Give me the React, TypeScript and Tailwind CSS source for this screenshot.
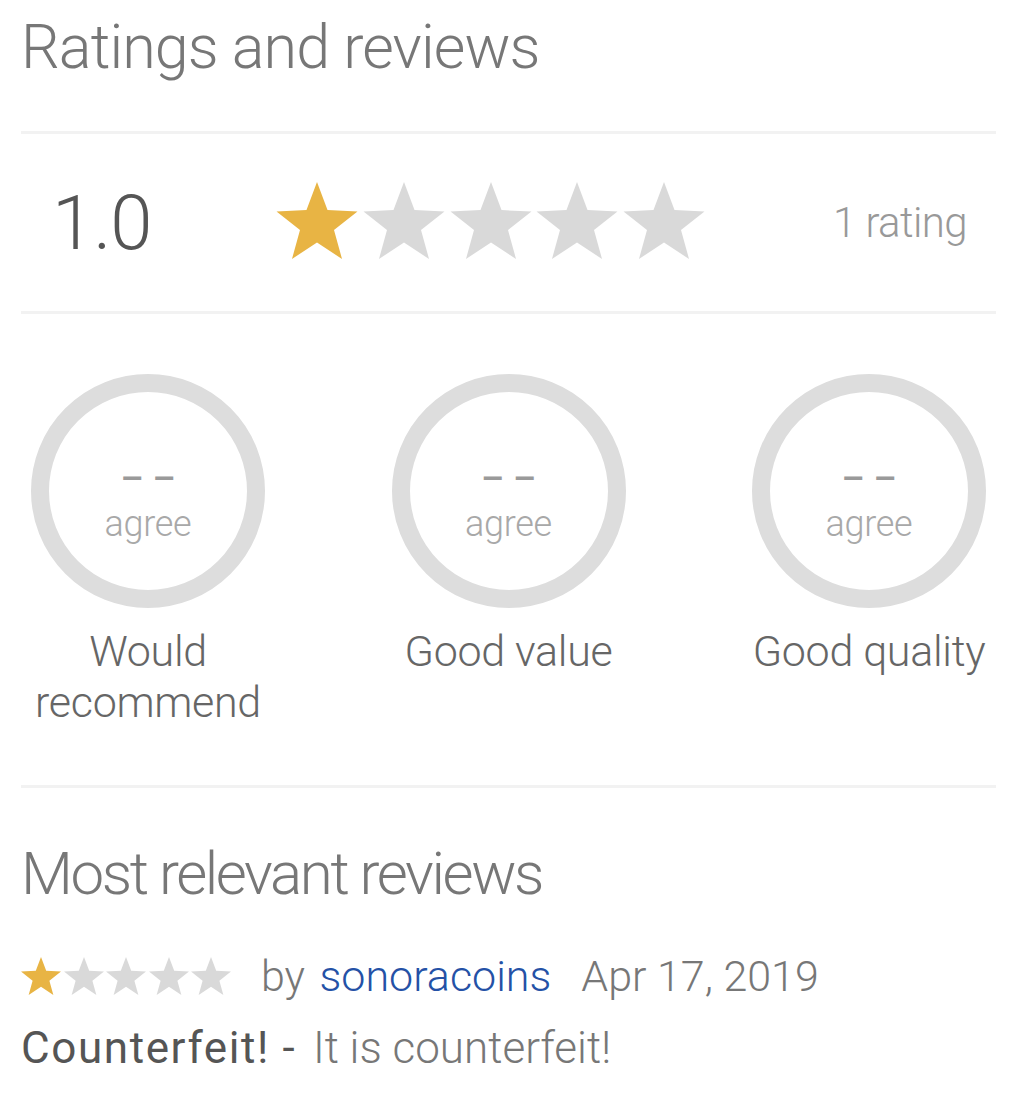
import React from "react";

function Star({ filled, className }: { filled: boolean; className: string }) {
  return (
    <svg viewBox="2.45 0 95.1 90.45" className={className} aria-hidden="true">
      <polygon
        points="50,0 62.35,33 97.55,34.55 69.97,56.49 79.39,90.45 50,71 20.61,90.45 30.03,56.49 2.45,34.55 37.65,33"
        fill={filled ? "#E8B444" : "#D9D9D9"}
      />
    </svg>
  );
}

function Divider() {
  return <div className="h-[3px] bg-[#f2f2f2]" />;
}

function Meter({ label }: { label: React.ReactNode }) {
  return (
    <div className="flex w-[234px] flex-col items-center">
      <div className="flex size-[234px] flex-col items-center rounded-full border-[18px] border-[#dddddd] pt-[67px]">
        <div className="text-[36px] leading-[40px] font-medium text-[#9a9a9a]">– –</div>
        <div className="mt-[5px] text-[36px] leading-[40px] tracking-[-0.3px] text-[#a8a8a8]">agree</div>
      </div>
      <div className="mt-[18px] text-center text-[43px] leading-[51px] tracking-[-0.3px] text-[#666666]">
        {label}
      </div>
    </div>
  );
}

export default function App() {
  return (
    <div className="min-h-[1099px] bg-white pl-[21px] pr-[33px] font-[Roboto,sans-serif] font-light">
      <h1 className="pt-[11px] pb-[48px] text-[61px] leading-[72px] tracking-[-0.9px] text-[#777777]">
        Ratings and reviews
      </h1>
      <Divider />
      <div className="flex h-[177px] items-center">
        <div className="w-[255px] pl-[31px] text-[76px] leading-[80px] tracking-[-1px] text-[#555555]">1.0</div>
        <div className="-mt-[5px] flex gap-[4.75px]">
          <Star filled className="h-[77px] w-[82px]" />
          <Star filled={false} className="h-[77px] w-[82px]" />
          <Star filled={false} className="h-[77px] w-[82px]" />
          <Star filled={false} className="h-[77px] w-[82px]" />
          <Star filled={false} className="h-[77px] w-[82px]" />
        </div>
        <div className="ml-auto mr-[29px] text-[42px] leading-[50px] tracking-[-0.6px] text-[#999999]">1 rating</div>
      </div>
      <Divider />
      <div className="flex justify-between px-[10px] pt-[60px] pb-[57px]">
        <Meter
          label={
            <>
              Would
              <br />
              recommend
            </>
          }
        />
        <Meter label="Good value" />
        <Meter label="Good quality" />
      </div>
      <Divider />
      <h2 className="mt-[50px] text-[60px] leading-[72px] tracking-[-2.4px] text-[#777777]">
        Most relevant reviews
      </h2>
      <div className="mt-[38px] flex h-[56px] items-center">
        <div className="flex gap-[2.5px]">
          <Star filled className="h-[38px] w-[40px]" />
          <Star filled={false} className="h-[38px] w-[40px]" />
          <Star filled={false} className="h-[38px] w-[40px]" />
          <Star filled={false} className="h-[38px] w-[40px]" />
          <Star filled={false} className="h-[38px] w-[40px]" />
        </div>
        <div className="ml-[30px] text-[43px] leading-[56px] text-[#777777]">
          by <span className="ml-[4px] text-[#2451a6]">sonoracoins</span>
          <span className="ml-[30px]">Apr 17, 2019</span>
        </div>
      </div>
      <p className="mt-[16px] text-[44px] leading-[56px] text-[#777777]">
        <span className="mr-[6px] font-normal tracking-[1.6px] text-[#555555]">Counterfeit! -</span> It is counterfeit!
      </p>
    </div>
  );
}
